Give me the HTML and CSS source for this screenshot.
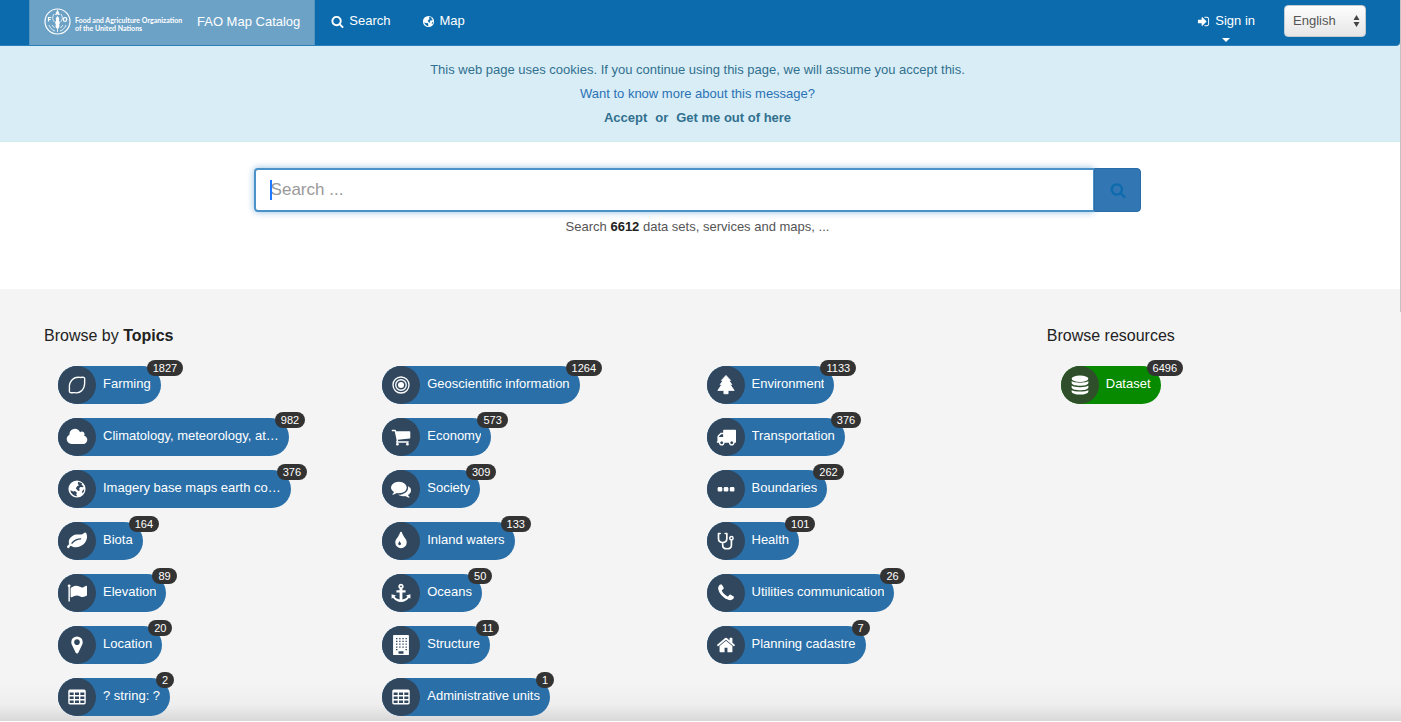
FILE: index.html
```html
<!DOCTYPE html>
<html lang="en">
<head>
<meta charset="utf-8">
<title>FAO Map Catalog</title>
<link rel="stylesheet" href="styles.css">
</head>
<body>
<svg class="sprite" aria-hidden="true">
  <symbol id="i-search" viewBox="0 0 1792 1792"><path d="M1216 832q0-185-131.5-316.5t-316.5-131.5-316.5 131.5-131.5 316.5 131.5 316.5 316.5 131.5 316.5-131.5 131.5-316.5zm512 832q0 52-38 90t-90 38q-54 0-90-38l-343-342q-179 124-399 124-143 0-273.5-55.5t-225-150-150-225-55.5-273.5 55.5-273.5 150-225 225-150 273.5-55.5 273.5 55.5 225 150 150 225 55.5 273.5q0 220-124 399l343 343q37 37 37 90z"/></symbol>
  <symbol id="i-globe" viewBox="0 0 24 24"><path fill-rule="evenodd" d="M12 1.700a10.300 10.300 0 1 0 0 20.600a10.300 10.300 0 1 0 0-20.600zM13.500 3.400L18 5.200L17.500 7L20 9L18.500 10L16 9.500L14.500 11.500L15.500 13.500L13.500 14.500L10.500 11L12.500 8.500L14.500 7.500L13 6zM4 13.500L7.500 15L9.500 14.500L12 16.500L11 18.500L12.500 20.600C8.500 20.800 5 18 4 13.500zM19.500 13L20.700 12.500C20.500 14.500 20 15.500 19 17L17.800 15.500z"/></symbol>
  <symbol id="i-signin" viewBox="0 0 1792 1792"><path d="M1312 896q0 26-19 45l-544 544q-19 19-45 19t-45-19-19-45v-288h-448q-26 0-45-19t-19-45v-384q0-26 19-45t45-19h448v-288q0-26 19-45t45-19 45 19l544 544q19 19 19 45zm352-352v704q0 119-84.5 203.500t-203.500 84.500h-320q-13 0-22.500-9.500t-9.500-22.500q0-4-1-20t-.5-26.500 3-23.500 10-19.500 20.500-6.500h320q66 0 113-47t47-113v-704q0-66-47-113t-113-47h-312l-11.500-1-11.500-3-8-5.500-7-9-2-13.500q0-4-1-20t-.5-26.500 3-23.500 10-19.500 20.500-6.500h320q119 0 203.500 84.500t84.500 203.500z"/></symbol>
  <symbol id="i-lemon" viewBox="0 0 24 24"><path fill="none" stroke="currentColor" stroke-width="1.700" stroke-linejoin="round" d="M20.500 3C21.800 4 21 5.500 21.200 8C21.500 13 20 16.500 17.500 19C15.500 21 12.500 21.800 9.500 21.200C7 20.800 4.800 22 3.500 21C2.200 19.800 3.200 18 2.900 15.500C2.500 11.500 4 8 6.500 5.500C9 3 12.500 2.500 15.500 2.900C17.500 3.100 19.500 2.200 20.500 3z"/></symbol>
  <symbol id="i-cloud" viewBox="0 0 2048 1792"><path d="M1984 1152q0 159-112.500 271.500t-271.500 112.500h-1088q-185 0-316.500-131.500t-131.500-316.500q0-132 71-241.500t187-163.500q-2-28-2-43 0-212 150-362t362-150q158 0 286.500 88t187.500 230q70-62 166-62 106 0 181 75t75 181q0 75-41 138 129 30 213 134.500t84 239.500z"/></symbol>
  <symbol id="i-leaf" viewBox="0 0 1792 1792"><path d="M1280 704q0-26-19-45t-45-19q-172 0-318 49.500t-259.500 134-235.500 219.500q-19 21-19 45 0 26 19 45t45 19q24 0 45-19 27-24 74-71t67-66q137-124 268.500-176t313.500-52q26 0 45-19t19-45zm512-198q0 95-20 193-46 224-184.500 383t-357.500 268q-214 108-438 108-148 0-286-47-15-5-88-42t-96-37q-16 0-39.500 32t-45 70-52.500 70-60 32q-43 0-63.500-17.500t-45.500-59.500q-2-4-6-11t-5.500-10-3-9.500-1.500-13.500q0-35 31-73.500t68-65.500 68-56 31-48q0-4-14-38t-16-44q-9-51-9-104 0-115 43.500-220t119-184.500 170.500-139 204-95.500q55-18 145-25.500t179.500-9 178.500-6 163.500-24 113.500-56.500l29.500-29.500 29.500-28 27-20 36.500-16 43.500-4.500q39 0 70.500 46t47.500 112 24 124 8 96z"/></symbol>
  <symbol id="i-flag" viewBox="0 0 1792 1792"><path d="M320 256q0 72-64 110v1266q0 13-9.500 22.500t-22.500 9.500h-64q-13 0-22.500-9.500t-9.500-22.500v-1266q-64-38-64-110 0-53 37.500-90.500t90.500-37.500 90.500 37.500 37.500 90.500zm1472 64v763q0 25-12.500 38.500t-39.500 27.500q-215 116-369 116-61 0-123.500-22t-108.500-48-115.500-48-142.500-22q-192 0-464 146-17 9-33 9-26 0-45-19t-19-45v-742q0-32 31-55 21-14 79-43 236-120 421-120 107 0 200 29t219 88q38 19 88 19 54 0 117.500-21t110-47 88-47 54.500-21q26 0 45 19t19 45z"/></symbol>
  <symbol id="i-marker" viewBox="0 0 1792 1792"><path d="M1152 640q0-106-75-181t-181-75-181 75-75 181 75 181 181 75 181-75 75-181zm256 0q0 109-33 179l-364 774q-16 33-47.500 52t-67.500 19-67.500-19-46.500-52l-365-774q-33-70-33-179 0-212 150-362t362-150 362 150 150 362z"/></symbol>
  <symbol id="i-table" viewBox="0 0 24 24"><path fill-rule="evenodd" d="M3.500 3h17a2 2 0 0 1 2 2v14a2 2 0 0 1-2 2h-17a2 2 0 0 1-2-2v-14a2 2 0 0 1 2-2zM3.200 6.500v3.200h4.800v-3.200zM9.600 6.500v3.200h4.800v-3.200zM16 6.500v3.200h4.800v-3.200zM3.200 11.300v3.200h4.800v-3.200zM9.600 11.300v3.200h4.800v-3.200zM16 11.300v3.200h4.800v-3.200zM3.200 16.100v3.200h4.800v-3.200zM9.600 16.100v3.200h4.800v-3.200zM16 16.100v3.200h4.800v-3.200z"/></symbol>
  <symbol id="i-target" viewBox="0 0 24 24"><g fill="none" stroke="currentColor" stroke-width="1.600"><circle cx="12" cy="12" r="9.600"/><circle cx="12" cy="12" r="6.300"/></g><circle cx="12" cy="12" r="3.600"/></symbol>
  <symbol id="i-cart" viewBox="0 0 1792 1792"><path d="M704 1536q0 52-38 90t-90 38-90-38-38-90 38-90 90-38 90 38 38 90zm896 0q0 52-38 90t-90 38-90-38-38-90 38-90 90-38 90 38 38 90zm128-1088v512q0 24-16.500 42.500t-40.500 21.500l-1044 122q13 60 13 70 0 16-24 64h920q26 0 45 19t19 45-19 45-45 19h-1024q-26 0-45-19t-19-45q0-11 8-31.500t16-36 21.500-40 15.500-29.500l-177-823h-204q-26 0-45-19t-19-45 19-45 45-19h256q16 0 28.500 6.500t19.500 15.500 13 24.500 8 26 5.500 29.500 4.500 26h1201q26 0 45 19t19 45z"/></symbol>
  <symbol id="i-comments" viewBox="0 0 1792 1792"><path d="M1408 768q0 139-94 257t-256.500 186.500-353.500 68.500q-86 0-176-16-124 88-278 128-36 9-86 16h-3q-11 0-20.500-8t-11.500-21q-1-3-1-6.500t.5-6.500 2-6l2.500-5 3.500-5.500 4-5 4.500-5 4-4.500q5-6 23-25t26-29.500 22.500-29 25-38.500 20.500-44q-124-72-195-177t-71-224q0-139 94-257t256.500-186.500 353.500-68.500 353.500 68.500 256.500 186.500 94 257zm384 256q0 120-71 224.500t-195 176.500q10 24 20.500 44t25 38.500 22.500 29 26 29.500 23 25q1 1 4 4.500t4.500 5 4 5 3.500 5.500l2.500 5 2 6 .5 6.500-1 6.500q-3 14-13 22t-22 7q-50-7-86-16-154-40-278-128-90 16-176 16-271 0-472-132 58 4 88 4 161 0 309-45t264-129q125-92 192-212t67-254q0-77-23-152 129 71 204 178t75 230z"/></symbol>
  <symbol id="i-tint" viewBox="0 0 1792 1792"><path d="M896 1152q0-36-20-69-1-1-15.500-22.500t-25.500-38-25-44-21-50.500q-4-16-21-16t-21 16q-7 23-21 50.500t-25 44-25.500 38-15.500 22.500q-20 33-20 69 0 53 37.500 90.500t90.500 37.500 90.500-37.500 37.500-90.500zm512-128q0 212-150 362t-362 150-362-150-150-362q0-145 81-275 6-9 62.500-90.500t101-151 99.500-178 83-201.500q9-30 34-47t51-17 51.500 17 33.500 47q28 93 83 201.500t99.500 178 101 151 62.500 90.500q81 127 81 275z"/></symbol>
  <symbol id="i-anchor" viewBox="0 0 24 24"><path fill-rule="evenodd" d="M12 .8a3.300 3.300 0 0 1 1.700 6.100v1.900h3.800v2.600h-3.800v8.300c2.800-.4 4.800-1.600 6-3.200l-1.600-1.500l5.200-1.600v5.600l-1.700-1.300c-2.100 3.100-5.600 5-9.600 5s-7.500-1.900-9.600-5l-1.700 1.300v-5.600l5.200 1.600l-1.600 1.500c1.200 1.600 3.200 2.800 6 3.200v-8.300h-3.800v-2.600h3.800v-1.900a3.300 3.300 0 0 1 1.700-6.100zM12 2.900a1.100 1.100 0 1 0 0 2.200a1.100 1.100 0 1 0 0-2.200z"/></symbol>
  <symbol id="i-building" viewBox="0 0 24 24"><rect x="2.500" y="0" width="19" height="24" rx="1"/><g fill="#30475e"><path d="M9 19.500h6v3h-6z"/></g><path fill="none" stroke="#30475e" stroke-width="1.500" stroke-dasharray="1.700 2.100" d="M6 4.200h13M6 7.600h13M6 11h13M6 14.400h13M6 17.500h2M17.400 17.500h2"/></symbol>
  <symbol id="i-tree" viewBox="0 0 24 24"><path d="M12 .5L17.500 6.500H15.500L19 11.500H17L21.800 18.500H14.500V22.500H9.500V18.500H2.200L7 11.500H5L8.500 6.500H6.500z" stroke="currentColor" stroke-width="1" stroke-linejoin="round"/></symbol>
  <symbol id="i-truck" viewBox="0 0 1792 1792"><path d="M640 1408q0-52-38-90t-90-38-90 38-38 90 38 90 90 38 90-38 38-90zm-384-512h384v-256h-158q-13 0-22 9l-195 195q-9 9-9 22v30zm1280 512q0-52-38-90t-90-38-90 38-38 90 38 90 90 38 90-38 38-90zm256-1088v1024q0 15-4 26.500t-13.500 18.500-16.500 11.500-23.500 6-22.500 2-25.500 0-22.500-.5q0 106-75 181t-181 75-181-75-75-181h-384q0 106-75 181t-181 75-181-75-75-181h-64q-3 0-22.500.5t-25.500 0-22.500-2-23.500-6-16.500-11.500-13.500-18.500-4-26.500q0-26 19-45t45-19v-320q0-8-.5-35t0-38 2.500-34.500 6.500-37 14-30.500 22.500-30l198-198q19-19 50.500-32t58.500-13h160v-192q0-26 19-45t45-19h1024q26 0 45 19t19 45z"/></symbol>
  <symbol id="i-dots" viewBox="0 0 24 24"><rect x="2" y="9.500" width="5.500" height="5.500" rx="1.500"/><rect x="9.300" y="9.500" width="5.500" height="5.500" rx="1.500"/><rect x="16.600" y="9.500" width="5.500" height="5.500" rx="1.500"/></symbol>
  <symbol id="i-stethoscope" viewBox="0 0 24 24"><path fill="none" stroke="currentColor" stroke-width="2" stroke-linecap="round" stroke-linejoin="round" d="M5 3H3V9C3 12 5 13.800 8 13.800S13 12 13 9V3H11M8 14V17C8 19.800 10.300 21.300 13.200 21.300S18.500 19.800 18.500 17V11"/><circle cx="18.500" cy="8.700" r="2" fill="none" stroke="currentColor" stroke-width="1.800"/></symbol>
  <symbol id="i-phone" viewBox="0 0 1792 1792"><path d="M1600 1240q0 27-10 70.500t-21 68.500q-21 50-122 106-94 51-186 51-27 0-53-3.500t-57.500-12.500-47-14.500-55.500-20.500-49-18q-98-35-175-83-127-79-264-216t-216-264q-48-77-83-175-3-9-18-49t-20.500-55.500-14.500-47-12.500-57.500-3.500-53q0-92 51-186 56-101 106-122 25-11 68.500-21t70.500-10q14 0 21 3 18 6 53 76 11 19 30 54t35 63.500 31 53.500q3 4 17.500 25t21.500 35.500 7 28.500q0 20-28.500 50t-62 55-62 53-28.500 46q0 9 5 22.500t8.500 20.500 14 24 11.500 19q76 137 174 235t235 174q2 1 19 11.500t24 14 20.500 8.500 22.500 5q18 0 46-28.500t53-62 55-62 50-28.500q14 0 28.500 7t35.500 21.500 25 17.500q25 15 53.500 31t63.500 35 54 30q70 35 76 53 3 7 3 21z"/></symbol>
  <symbol id="i-home" viewBox="0 0 1792 1792"><path d="M1472 992v480q0 26-19 45t-45 19h-384v-384h-256v384h-384q-26 0-45-19t-19-45v-480q0-1 .5-3t.5-3l575-474 575 474q1 2 1 6zm223-69l-62 74q-8 9-21 11h-3q-13 0-21-7l-692-577-692 577q-12 8-24 7-13-2-21-11l-62-74q-8-10-7-23.500t11-21.500l719-599q32-26 76-26t76 26l244 204v-195q0-14 9-23t23-9h192q14 0 23 9t9 23v408l219 182q10 8 11 21.500t-7 23.500z"/></symbol>
  <symbol id="i-database" viewBox="0 0 24 24"><ellipse cx="12" cy="4.500" rx="10" ry="3.900"/><path d="M2 7.300C4.500 10 19.500 10 22 7.300V10C21 14 3 14 2 10zM2 12.600C4.500 15.300 19.500 15.300 22 12.600V15.200C21 19.200 3 19.200 2 15.200zM2 17.900C4.500 20.600 19.500 20.600 22 17.900V20C21 24.500 3 24.500 2 20z"/></symbol>
</svg>

<header class="navbar">
  <a class="brand" href="#">
    <svg class="emblem" viewBox="0 0 27 27" aria-hidden="true">
      <circle cx="13.500" cy="13.500" r="12.500" stroke-width="1.200"/>
      <path stroke-width="1.200" d="M4.500 13.500v-4h2.800M4.500 11.500h2.200M11.700 7l1.800-4l1.800 4M12.300 5.800h2.400"/>
      <circle cx="21" cy="11.500" r="1.800" stroke-width="1.200"/>
      <path stroke-width=".8" d="M13.500 9v15M10 6c-2 3-1.500 6 .5 8M17 6c2 3 1.500 6-.5 8M5 17c1 3 3 5 6 6M22 17c-1 3-3 5-6 6M8 17l2.500 3M19 17l-2.500 3"/>
      <path class="grain" d="M13.500 8c1.800 1.500 2 3.200 1.300 4.500c1.300 1 1.300 3 .3 4c.9 1.300.4 3.500-1.600 4.500c-2-1-2.500-3.200-1.600-4.500c-1-1-1-3 .3-4c-.7-1.300-.5-3 1.300-4.500z"/>
    </svg>
    <span class="org">Food and Agriculture Organization<br>of the United Nations</span>
    <span>FAO Map Catalog</span>
  </a>
  <nav class="menu">
    <a href="#"><svg class="nav-icon"><use href="#i-search"/></svg>Search</a>
    <a href="#"><svg class="nav-icon"><use href="#i-globe"/></svg>Map</a>
  </nav>
  <a class="signin" href="#"><span><svg class="nav-icon"><use href="#i-signin"/></svg>Sign in</span><i class="caret"></i></a>
  <div class="language">
    <select aria-label="Language"><option>English</option></select>
    <svg class="updown" viewBox="0 0 6 12" aria-hidden="true"><path d="M3 0l3 5h-6zM3 12l-3-5h6z"/></svg>
  </div>
</header>

<section class="cookies">
  <p>This web page uses cookies. If you continue using this page, we will assume you accept this.</p>
  <p><a class="more" href="#">Want to know more about this message?</a></p>
  <p class="choices"><a href="#">Accept</a><span>or</span><a href="#">Get me out of here</a></p>
</section>

<main>
  <section class="finder">
    <form class="search-form">
      <input type="text" placeholder="Search ..." aria-label="Search">
      <i class="cursor"></i>
      <button type="button" aria-label="Search"><svg><use href="#i-search"/></svg></button>
    </form>
    <p>Search <strong>6612</strong> data sets, services and maps, ...</p>
  </section>

  <section class="browse">
    <div class="topics">
      <h2>Browse by <b>Topics</b></h2>
      <div class="chips">
        <a class="chip" href="#"><span class="disc"><svg><use href="#i-lemon"/></svg></span><span class="label">Farming</span><span class="badge">1827</span></a>
        <a class="chip" href="#"><span class="disc"><svg><use href="#i-target"/></svg></span><span class="label">Geoscientific information</span><span class="badge">1264</span></a>
        <a class="chip" href="#"><span class="disc"><svg><use href="#i-tree"/></svg></span><span class="label">Environment</span><span class="badge">1133</span></a>
        <a class="chip" href="#"><span class="disc"><svg class="wide"><use href="#i-cloud"/></svg></span><span class="label">Climatology, meteorology, at…</span><span class="badge">982</span></a>
        <a class="chip" href="#"><span class="disc"><svg><use href="#i-cart"/></svg></span><span class="label">Economy</span><span class="badge">573</span></a>
        <a class="chip" href="#"><span class="disc"><svg><use href="#i-truck"/></svg></span><span class="label">Transportation</span><span class="badge">376</span></a>
        <a class="chip" href="#"><span class="disc"><svg><use href="#i-globe"/></svg></span><span class="label">Imagery base maps earth co…</span><span class="badge">376</span></a>
        <a class="chip" href="#"><span class="disc"><svg><use href="#i-comments"/></svg></span><span class="label">Society</span><span class="badge">309</span></a>
        <a class="chip" href="#"><span class="disc"><svg><use href="#i-dots"/></svg></span><span class="label">Boundaries</span><span class="badge">262</span></a>
        <a class="chip" href="#"><span class="disc"><svg><use href="#i-leaf"/></svg></span><span class="label">Biota</span><span class="badge">164</span></a>
        <a class="chip" href="#"><span class="disc"><svg><use href="#i-tint"/></svg></span><span class="label">Inland waters</span><span class="badge">133</span></a>
        <a class="chip" href="#"><span class="disc"><svg><use href="#i-stethoscope"/></svg></span><span class="label">Health</span><span class="badge">101</span></a>
        <a class="chip" href="#"><span class="disc"><svg><use href="#i-flag"/></svg></span><span class="label">Elevation</span><span class="badge">89</span></a>
        <a class="chip" href="#"><span class="disc"><svg><use href="#i-anchor"/></svg></span><span class="label">Oceans</span><span class="badge">50</span></a>
        <a class="chip" href="#"><span class="disc"><svg><use href="#i-phone"/></svg></span><span class="label">Utilities communication</span><span class="badge">26</span></a>
        <a class="chip" href="#"><span class="disc"><svg><use href="#i-marker"/></svg></span><span class="label">Location</span><span class="badge">20</span></a>
        <a class="chip" href="#"><span class="disc"><svg><use href="#i-building"/></svg></span><span class="label">Structure</span><span class="badge">11</span></a>
        <a class="chip" href="#"><span class="disc"><svg><use href="#i-home"/></svg></span><span class="label">Planning cadastre</span><span class="badge">7</span></a>
        <a class="chip" href="#"><span class="disc"><svg><use href="#i-table"/></svg></span><span class="label">? string: ?</span><span class="badge">2</span></a>
        <a class="chip" href="#"><span class="disc"><svg><use href="#i-table"/></svg></span><span class="label">Administrative units</span><span class="badge">1</span></a>
      </div>
    </div>
    <div class="resources">
      <h2>Browse resources</h2>
      <div class="chips single">
        <a class="chip green" href="#"><span class="disc"><svg><use href="#i-database"/></svg></span><span class="label">Dataset</span><span class="badge">6496</span></a>
      </div>
    </div>
  </section>
</main>
<i class="scroll-thumb"></i>
</body>
</html>
```
FILE: styles.css
```css
* { box-sizing: border-box; }
body {
  margin: 0;
  min-height: 100vh;
  display: flex;
  flex-direction: column;
  background: #fff;
  color: #333;
  font-family: "Liberation Sans", Arial, sans-serif;
  font-size: 13px;
  line-height: 18px;
}
a { color: inherit; text-decoration: none; }
p, h2 { margin: 0; }
svg { fill: currentColor; }
.sprite { position: absolute; width: 0; height: 0; }

.navbar {
  display: flex;
  align-items: stretch;
  height: 46px;
  margin-right: 1px;
  padding: 0 34px 0 29px;
  border-bottom: 1px solid #2c7fb6;
  border-radius: 0 0 4px 0;
  background: #0c6bad;
  color: #fff;
}
.brand {
  display: flex;
  align-items: center;
  padding: 0 14px 2px;
  border-left: 1px solid #5594c1;
  border-right: 1px solid #5594c1;
  background: #6da2c7;
}
.emblem { width: 27px; height: 27px; margin-right: 4px; fill: none; stroke: currentColor; }
.grain { fill: currentColor; stroke: none; }
.org {
  width: 122px;
  font: bold 7px/8px Lato, sans-serif;
  white-space: nowrap;
  padding-top: 5px;
}
.menu { display: flex; flex: 1; }
.menu a { display: flex; align-items: center; padding: 0 15px 3px 16px; }
.nav-icon { width: 13px; height: 13px; margin-right: 5px; }
.signin {
  display: flex;
  flex-direction: column;
  align-items: center;
  padding: 12px 29px 0 0;
}
.signin span { display: flex; align-items: center; }
.caret {
  margin-top: 8px;
  border: 4px solid transparent;
  border-top-color: #fff;
  border-bottom: 0;
}
.language { position: relative; padding-top: 5px; }
.language select {
  appearance: none;
  width: 82px;
  height: 32px;
  padding: 0 8px;
  border: 1px solid #c6cbd0;
  border-radius: 4px;
  background: linear-gradient(#fdfdfd, #e6e6e6);
  color: #555;
  font: inherit;
}
.updown {
  position: absolute;
  right: 6px;
  top: 15px;
  width: 7px;
  height: 12px;
  color: #444;
}

.cookies {
  display: flex;
  flex-direction: column;
  gap: 6px;
  margin-right: 1px;
  padding: 15px 34px 14px 29px;
  border-bottom: 1px solid #d0edf0;
  background: #d9edf6;
  color: #31708f;
  text-align: center;
}
.more { color: #2a72b5; }
.choices { display: flex; justify-content: center; gap: 8px; font-weight: bold; }

main { display: flex; flex: 1; flex-direction: column; }
.finder { padding: 26px 35px 53px 29px; text-align: center; color: #555; }
.finder p { margin-top: 6px; }
.finder strong { color: #222; }
.search-form {
  position: relative;
  display: flex;
  width: 66.4%;
  height: 44px;
  margin: 0 auto;
}
.search-form input {
  flex: 1;
  min-width: 0;
  padding: 0 15px;
  border: 2px solid #4a92c8;
  border-right-width: 1px;
  border-radius: 4px 0 0 4px;
  outline: none;
  background: #fff;
  box-shadow: 0 0 7px #8fbbe0;
  color: #555;
  font: 17px "Liberation Sans", Arial, sans-serif;
}
.search-form input::placeholder { color: #999; opacity: 1; }
.cursor {
  position: absolute;
  left: 16px;
  top: 12px;
  width: 2px;
  height: 20px;
  background: #1e7bff;
}
.search-form button {
  position: relative;
  width: 47px;
  padding: 0;
  border: 1px solid #2a6ca8;
  border-radius: 0 4px 4px 0;
  background: #3276b4;
  color: #0c6bad;
}
.search-form button svg { display: block; width: 16px; height: 16px; margin: 0 auto; }

.browse {
  display: grid;
  grid-template-columns: 3fr 1fr;
  flex: 1;
  margin-bottom: 1px;
  padding: 38px 35px 5px 29px;
  background: linear-gradient(#f4f4f4 calc(100% - 36px), #eee calc(100% - 16px), #d8d8d8);
}
.topics, .resources { padding: 0 15px; min-width: 0; }
h2 { font-size: 16px; font-weight: normal; line-height: 18px; color: #222; }
.chips {
  display: grid;
  grid-template-columns: repeat(3, 1fr);
  gap: 14px 0;
  margin-top: 21px;
}
.single { grid-template-columns: 1fr; }
.chip {
  position: relative;
  display: flex;
  align-items: center;
  justify-self: start;
  height: 38px;
  max-width: 234px;
  margin-left: 14px;
  padding: 0 10px 2px 0;
  border-radius: 19px;
  background: #2a6fa8;
  color: #fff;
}
.green { background: #088a00; }
.disc {
  display: flex;
  flex: none;
  align-items: center;
  justify-content: center;
  width: 38px;
  height: 38px;
  margin: 2px 7px 0 0;
  border-radius: 50%;
  background: #30475e;
}
.green .disc { background: #2f4f2b; }
.disc svg { width: 20px; height: 20px; }
.disc .wide { width: 22px; }
.label { overflow: hidden; text-overflow: ellipsis; white-space: nowrap; }
.badge {
  position: absolute;
  left: calc(100% - 14px);
  top: -6px;
  padding: 0 6px;
  border-radius: 8px;
  background: #333;
  color: #fff;
  font-size: 11px;
  line-height: 16px;
}
.scroll-thumb {
  position: absolute;
  right: 0;
  top: 0;
  width: 1px;
  height: 312px;
  background: #c4c4c4;
}
```
